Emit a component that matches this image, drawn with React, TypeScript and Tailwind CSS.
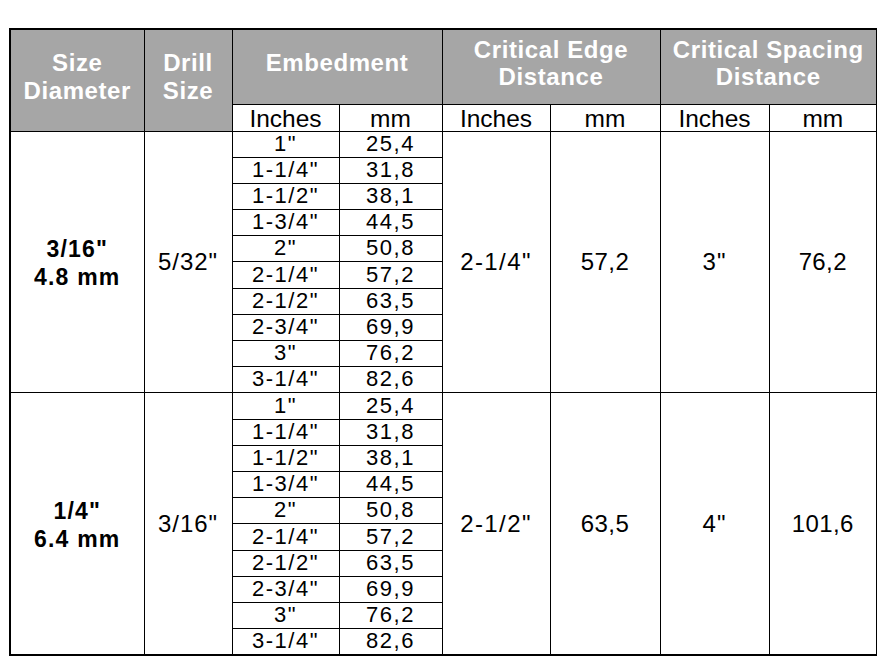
import React from 'react';

// Anchor specification table: two size groups, ten embedment depths each.

interface SizeGroup {
  inch: string;
  metric: string;
  drill: string;
  edgeIn: string;
  edgeMm: string;
  spacingIn: string;
  spacingMm: string;
}

const embedments: [string, string][] = [
  ['1"', '25,4'],
  ['1-1/4"', '31,8'],
  ['1-1/2"', '38,1'],
  ['1-3/4"', '44,5'],
  ['2"', '50,8'],
  ['2-1/4"', '57,2'],
  ['2-1/2"', '63,5'],
  ['2-3/4"', '69,9'],
  ['3"', '76,2'],
  ['3-1/4"', '82,6'],
];

const groups: SizeGroup[] = [
  { inch: '3/16"', metric: '4.8 mm', drill: '5/32"', edgeIn: '2-1/4"', edgeMm: '57,2', spacingIn: '3"', spacingMm: '76,2' },
  { inch: '1/4"', metric: '6.4 mm', drill: '3/16"', edgeIn: '2-1/2"', edgeMm: '63,5', spacingIn: '4"', spacingMm: '101,6' },
];

const line = 'border-[1.5px] border-black';
const head = `${line} bg-[#a6a6a6] text-white font-bold text-[24px] tracking-[0.6px] text-center align-middle p-0`;
const sub = `${line} h-[27px] text-[24.5px] leading-[24px] text-center align-bottom p-0`;
const cell = `${line} text-[24px] leading-[24px] tracking-[0.4px] text-center align-middle p-0`;
const depth = 'border border-black h-[26.2px] text-[22px] leading-[22px] tracking-[1.5px] text-center align-bottom p-0 pb-[2px]';

export default function App() {
  return (
    <div className="min-h-screen bg-white pt-[28px] pl-[9px] text-black [font-family:'Liberation_Sans',Arial,sans-serif]">
      <table className="table-fixed border-collapse border-2 border-black w-[867px]">
        <colgroup>
          <col className="w-[134px]" />
          <col className="w-[88px]" />
          <col className="w-[107px]" />
          <col className="w-[103px]" />
          <col className="w-[108px]" />
          <col className="w-[110px]" />
          <col className="w-[109px]" />
          <col className="w-[108px]" />
        </colgroup>
        <thead>
          <tr className="h-[75px]">
            <th rowSpan={2} className={`${head} leading-[28px] pb-[7px]`}>Size<br />Diameter</th>
            <th rowSpan={2} className={`${head} leading-[28px] pb-[7px]`}>Drill<br />Size</th>
            <th colSpan={2} className={`${head} leading-[28px] pb-[8px]`}>Embedment</th>
            <th colSpan={2} className={`${head} leading-[27px] pb-[7px]`}>Critical Edge<br />Distance</th>
            <th colSpan={2} className={`${head} leading-[27px] pb-[7px]`}>Critical Spacing<br />Distance</th>
          </tr>
          <tr>
            <td className={sub}>Inches</td>
            <td className={sub}>mm</td>
            <td className={sub}>Inches</td>
            <td className={sub}>mm</td>
            <td className={sub}>Inches</td>
            <td className={sub}>mm</td>
          </tr>
        </thead>
        <tbody>
          {groups.map((g) =>
            embedments.map(([inches, mm], i) => (
              <tr key={`${g.inch}-${inches}`}>
                {i === 0 && (
                  <>
                    <td rowSpan={10} className={`${line} text-[23px] leading-[28px] tracking-[1.2px] font-bold text-center align-middle p-0 pt-[2px]`}>
                      {g.inch}<br />{g.metric}
                    </td>
                    <td rowSpan={10} className={`${cell} tracking-[1px]`}>{g.drill}</td>
                  </>
                )}
                <td className={depth}>{inches}</td>
                <td className={depth}>{mm}</td>
                {i === 0 && (
                  <>
                    <td rowSpan={10} className={`${cell} tracking-[1.4px]`}>{g.edgeIn}</td>
                    <td rowSpan={10} className={cell}>{g.edgeMm}</td>
                    <td rowSpan={10} className={`${cell} tracking-[1px]`}>{g.spacingIn}</td>
                    <td rowSpan={10} className={cell}>{g.spacingMm}</td>
                  </>
                )}
              </tr>
            ))
          )}
        </tbody>
      </table>
    </div>
  );
}
